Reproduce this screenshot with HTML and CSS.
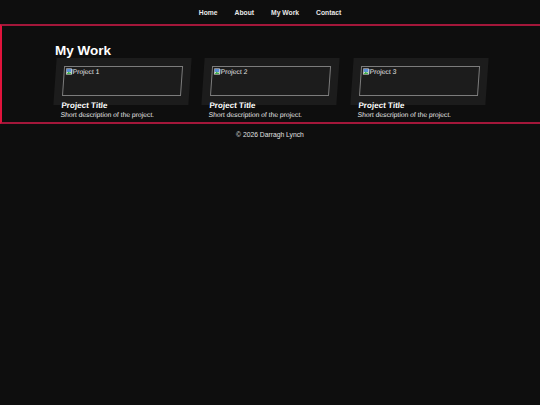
FILE: index.html
```html
<!DOCTYPE html>
<html lang="en">
<head>
<meta charset="utf-8">
<title>My Work - Darragh Lynch</title>
<link rel="stylesheet" href="styles.css">
</head>
<body>
<nav class="nav">
  <a class="nav-link" href="#">Home</a>
  <a class="nav-link" href="#">About</a>
  <a class="nav-link" href="#">My Work</a>
  <a class="nav-link" href="#">Contact</a>
</nav>
<section class="work">
  <div class="container">
    <h2 class="work-title">My Work</h2>
    <div class="grid">
      <div class="card">
        <div class="thumb"><svg class="broken" viewBox="0 0 7 7"><path d="M0.5 0.5h5l1 1v5h-6z" fill="#e8e8e8" stroke="#8a8a8a" stroke-width="0.6"/><rect x="1" y="1" width="4.5" height="3" fill="#5b8fd6"/><path d="M1 6l2-2.5 1.5 1.5 1-1v2z" fill="#3fae4a"/></svg><span class="alt">Project 1</span></div>
        <h3 class="card-title">Project Title</h3>
        <p class="card-desc">Short description of the project.</p>
      </div>
      <div class="card">
        <div class="thumb"><svg class="broken" viewBox="0 0 7 7"><path d="M0.5 0.5h5l1 1v5h-6z" fill="#e8e8e8" stroke="#8a8a8a" stroke-width="0.6"/><rect x="1" y="1" width="4.5" height="3" fill="#5b8fd6"/><path d="M1 6l2-2.5 1.5 1.5 1-1v2z" fill="#3fae4a"/></svg><span class="alt">Project 2</span></div>
        <h3 class="card-title">Project Title</h3>
        <p class="card-desc">Short description of the project.</p>
      </div>
      <div class="card">
        <div class="thumb"><svg class="broken" viewBox="0 0 7 7"><path d="M0.5 0.5h5l1 1v5h-6z" fill="#e8e8e8" stroke="#8a8a8a" stroke-width="0.6"/><rect x="1" y="1" width="4.5" height="3" fill="#5b8fd6"/><path d="M1 6l2-2.5 1.5 1.5 1-1v2z" fill="#3fae4a"/></svg><span class="alt">Project 3</span></div>
        <h3 class="card-title">Project Title</h3>
        <p class="card-desc">Short description of the project.</p>
      </div>
    </div>
  </div>
</section>
<footer class="footer">© 2026 Darragh Lynch</footer>
</body>
</html>
```
FILE: styles.css
```css
html, body {
  margin: 0;
  padding: 0;
  background: #0e0e0e;
  color: #e6e6e6;
  font-family: "Liberation Sans", Arial, sans-serif;
  font-size: 6.75px;
  min-height: 100%;
}

.nav {
  height: 24px;
  display: flex;
  justify-content: center;
  align-items: center;
  gap: 17px;
}

.nav-link {
  color: #e8e8e8;
  text-decoration: none;
  font-weight: bold;
  font-size: 6.75px;
}

.work {
  border-top: 2px solid #a3173a;
  border-bottom: 2px solid #a3173a;
  border-left: 2px solid #e0143c;
  padding: 16px 0 17px;
}

.container {
  width: 432px;
  margin: 0 auto;
}

.work-title {
  margin: 0;
  padding-top: 1px;
  font-size: 13.5px;
  line-height: 15px;
  font-weight: bold;
  color: #ffffff;
}

.grid {
  display: grid;
  grid-template-columns: repeat(3, 1fr);
  gap: 13px;
}

.card {
  background: #1c1c1c;
  height: 47px;
  padding: 8px;
  box-sizing: border-box;
  transform: skewX(-4deg);
}

.thumb {
  height: 30px;
  border: 1px solid #7c7c7c;
  box-sizing: border-box;
  display: flex;
  align-items: flex-start;
  padding: 1px 0 0 1px;
}

.broken {
  width: 7px;
  height: 7px;
  flex: none;
}

.alt {
  font-size: 6.75px;
  line-height: 7px;
  color: #e8e8e8;
}

.card-title {
  margin: 0;
  padding-top: 5px;
  font-size: 8.1px;
  line-height: 9px;
  font-weight: bold;
  color: #ffffff;
}

.card-desc {
  margin: 0;
  font-size: 6.75px;
  line-height: 9px;
  color: #e6e6e6;
}

.footer {
  text-align: center;
  font-size: 6.75px;
  line-height: 8px;
  padding-top: 7px;
  color: #e0e0e0;
}
```
